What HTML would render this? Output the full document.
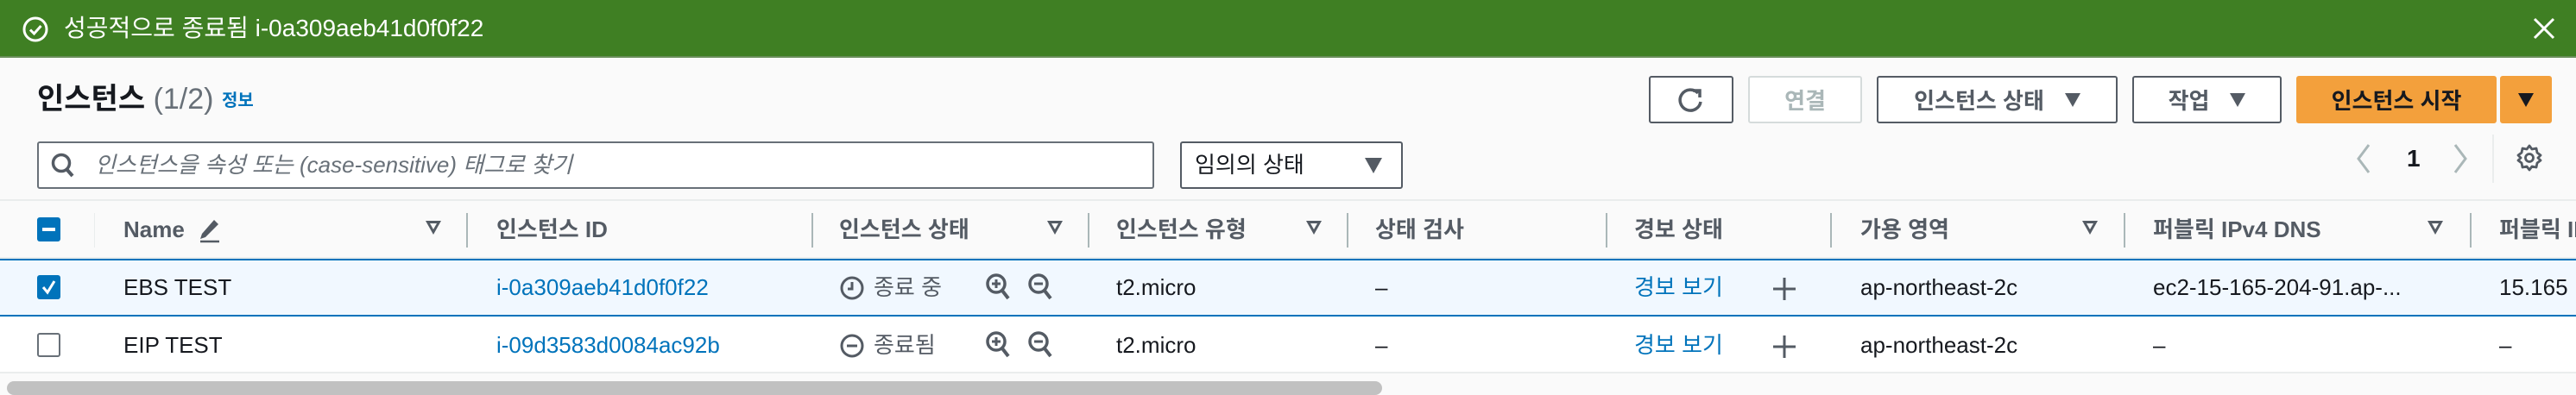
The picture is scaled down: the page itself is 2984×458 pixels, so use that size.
<!DOCTYPE html>
<html><head><meta charset="utf-8"><style>
*{margin:0;padding:0;box-sizing:border-box}
body{width:2984px;height:456px;overflow:hidden;background:#fafafa;font-family:"Liberation Sans","Noto Sans CJK KR",sans-serif;color:#16191f;position:relative}
.a{position:absolute;white-space:nowrap}
.t{font-size:26px;line-height:30px}
.h{font-size:26px;font-weight:bold;color:#545b64;line-height:30px}
.btn{position:absolute;top:88px;height:55px;border:2px solid #545b64;border-radius:3px;background:#fff;font-size:26px;font-weight:bold;color:#545b64;display:flex;align-items:center;justify-content:center}
.link{color:#0073bb}
.div{position:absolute;top:247px;width:2px;height:40px;background:#aab7b8}
.tri{position:absolute;top:256px;width:0;height:0;border-left:9px solid transparent;border-right:9px solid transparent;border-top:16px solid #545b64}
.tri::after{content:"";position:absolute;left:-4px;top:-13px;border-left:4px solid transparent;border-right:4px solid transparent;border-top:7px solid #fafafa}
.dd{display:inline-block;width:0;height:0;border-left:9px solid transparent;border-right:9px solid transparent;border-top:16px solid #545b64;margin-left:24px}
</style></head><body>
<div class="a" style="left:0;top:0;width:2984px;height:67px;background:#3f7f23;border-bottom:2px solid #6a8f5a"></div>
<svg class="a" style="left:25px;top:18px" width="32" height="32" viewBox="0 0 32 32"><circle cx="16" cy="16" r="13" fill="none" stroke="#fff" stroke-width="3"/><path d="M10 16.5l4.5 4.5 8-9" fill="none" stroke="#fff" stroke-width="3"/></svg>
<div class="a" style="left:74px;top:16px;font-size:28px;line-height:34px;color:#fff">성공적으로 종료됨 i-0a309aeb41d0f0f22</div>
<svg class="a" style="left:2934px;top:20px" width="26" height="26" viewBox="0 0 26 26"><path d="M2 2L24 24M24 2L2 24" stroke="#fff" stroke-width="3"/></svg>

<div class="a" style="left:43px;top:95px;font-size:34px;font-weight:bold;line-height:40px">인스턴스 <span style="font-weight:normal;color:#687078">(1/2)</span> <span style="font-size:20px;color:#0073bb;vertical-align:middle">정보</span></div>

<div class="btn" style="left:1910px;width:98px"><svg width="36" height="36" viewBox="0 0 36 36"><path d="M26 10A12 12 0 1 0 29 20" fill="none" stroke="#545b64" stroke-width="3.5"/><path d="M20 7h8v8" fill="none" stroke="#545b64" stroke-width="3.5"/></svg></div>
<div class="btn" style="left:2025px;width:132px;border-color:#d5dbdb;color:#aab7b8">연결</div>
<div class="btn" style="left:2174px;width:279px">인스턴스 상태<span class="dd"></span></div>
<div class="btn" style="left:2470px;width:173px">작업<span class="dd"></span></div>
<div class="btn" style="left:2660px;width:232px;background:#f3a03c;border-color:#f3a03c;color:#16191f">인스턴스 시작</div>
<div class="btn" style="left:2896px;width:60px;background:#f3a03c;border-color:#f3a03c"><span class="dd" style="margin:0;border-top-color:#16191f"></span></div>

<div class="a" style="left:43px;top:164px;width:1294px;height:55px;border:2px solid #687078;border-radius:3px;background:#fff"></div>
<svg class="a" style="left:58px;top:176px" width="30" height="32" viewBox="0 0 30 32"><circle cx="13" cy="13" r="9.5" fill="none" stroke="#545b64" stroke-width="3.5"/><path d="M19 20l7 8" stroke="#545b64" stroke-width="4"/></svg>
<div class="a" style="left:110px;top:176px;font-size:26px;font-style:italic;color:#687078;line-height:30px">인스턴스을 속성 또는 (case-sensitive) 태그로 찾기</div>
<div class="a" style="left:1367px;top:164px;width:258px;height:55px;border:2px solid #545b64;border-radius:3px;background:#fff"></div>
<div class="a t" style="left:1384px;top:176px">임의의 상태</div>
<div class="a" style="left:1581px;top:183px;border-left:10px solid transparent;border-right:10px solid transparent;border-top:18px solid #545b64"></div>

<svg class="a" style="left:2728px;top:166px" width="20" height="36" viewBox="0 0 20 36"><path d="M16 2L4 18l12 16" fill="none" stroke="#aab7b8" stroke-width="3"/></svg>
<div class="a" style="left:2788px;top:168px;font-size:28px;font-weight:bold;line-height:32px">1</div>
<svg class="a" style="left:2840px;top:166px" width="20" height="36" viewBox="0 0 20 36"><path d="M4 2l12 16L4 34" fill="none" stroke="#aab7b8" stroke-width="3"/></svg>
<div class="a" style="left:2887px;top:156px;width:2px;height:56px;background:#eaeded"></div>
<svg class="a" style="left:2913px;top:166px" width="34" height="34" viewBox="0 0 34 34"><path d="M17 3l3 4 5-1 1 5 4 3-3 3 3 3-4 3-1 5-5-1-3 4-3-4-5 1-1-5-4-3 3-3-3-3 4-3 1-5 5 1z" fill="none" stroke="#545b64" stroke-width="2.8" stroke-linejoin="round"/><circle cx="17" cy="17" r="4.5" fill="none" stroke="#545b64" stroke-width="2.8"/></svg>

<div class="a" style="left:0;top:231px;width:2984px;height:2px;background:#eaeded"></div>
<div class="a" style="left:43px;top:252px;width:27px;height:28px;background:#0073bb;border-radius:3px"></div>
<div class="a" style="left:49px;top:264px;width:15px;height:4px;background:#fff"></div>
<div class="a" style="left:109px;top:247px;width:1px;height:40px;background:#eaeded"></div>
<div class="a h" style="left:143px;top:251px">Name</div>
<svg class="a" style="left:228px;top:252px" width="30" height="30" viewBox="0 0 30 30"><path d="M20 3l5 5L10 23l-6 2 2-6z" fill="#545b64"/><path d="M4 28h22" stroke="#545b64" stroke-width="2.5"/></svg>
<div class="tri" style="left:493px"></div>
<div class="div" style="left:540px"></div>
<div class="a h" style="left:575px;top:251px">인스턴스 ID</div>
<div class="div" style="left:940px"></div>
<div class="a h" style="left:972px;top:251px">인스턴스 상태</div>
<div class="tri" style="left:1213px"></div>
<div class="div" style="left:1260px"></div>
<div class="a h" style="left:1293px;top:251px">인스턴스 유형</div>
<div class="tri" style="left:1513px"></div>
<div class="div" style="left:1560px"></div>
<div class="a h" style="left:1593px;top:251px">상태 검사</div>
<div class="div" style="left:1860px"></div>
<div class="a h" style="left:1893px;top:251px">경보 상태</div>
<div class="div" style="left:2120px"></div>
<div class="a h" style="left:2155px;top:251px">가용 영역</div>
<div class="tri" style="left:2412px"></div>
<div class="div" style="left:2460px"></div>
<div class="a h" style="left:2494px;top:251px">퍼블릭 IPv4 DNS</div>
<div class="tri" style="left:2812px"></div>
<div class="div" style="left:2861px"></div>
<div class="a h" style="left:2895px;top:251px">퍼블릭 IPv4</div>

<div class="a" style="left:0;top:298px;width:2984px;height:2px;background:#eaeded"></div>
<div class="a" style="left:0;top:300px;width:2984px;height:67px;background:#f1f8ff;border-top:2px solid #0073bb;border-bottom:2px solid #0073bb"></div>
<div class="a" style="left:43px;top:319px;width:27px;height:28px;background:#0073bb;border-radius:3px"></div>
<svg class="a" style="left:43px;top:319px" width="27" height="28" viewBox="0 0 27 28"><path d="M7 14l5 6 8-13" fill="none" stroke="#fff" stroke-width="3"/></svg>
<div class="a t" style="left:143px;top:318px">EBS TEST</div>
<div class="a t link" style="left:575px;top:318px">i-0a309aeb41d0f0f22</div>
<svg class="a" style="left:972px;top:319px" width="30" height="30" viewBox="0 0 30 30"><circle cx="15" cy="15" r="12" fill="none" stroke="#545b64" stroke-width="3"/><path d="M15 8v8h-5" fill="none" stroke="#545b64" stroke-width="3"/></svg>
<div class="a t" style="left:1012px;top:318px;color:#545b64">종료 중</div>
<svg class="a" style="left:1141px;top:316px" width="32" height="34" viewBox="0 0 32 34"><circle cx="13" cy="13" r="10" fill="none" stroke="#545b64" stroke-width="3.5"/><path d="M20 21l7 9" stroke="#545b64" stroke-width="4"/><path d="M13 8v10M8 13h10" stroke="#545b64" stroke-width="3"/></svg>
<svg class="a" style="left:1190px;top:316px" width="32" height="34" viewBox="0 0 32 34"><circle cx="13" cy="13" r="10" fill="none" stroke="#545b64" stroke-width="3.5"/><path d="M20 21l7 9" stroke="#545b64" stroke-width="4"/><path d="M8 13h10" stroke="#545b64" stroke-width="3"/></svg>
<div class="a t" style="left:1293px;top:318px">t2.micro</div>
<div class="a t" style="left:1593px;top:318px">–</div>
<div class="a t link" style="left:1893px;top:318px">경보 보기</div>
<svg class="a" style="left:2052px;top:320px" width="30" height="30" viewBox="0 0 30 30"><path d="M15 2v26M2 15h26" stroke="#545b64" stroke-width="3"/></svg>
<div class="a t" style="left:2155px;top:318px">ap-northeast-2c</div>
<div class="a t" style="left:2494px;top:318px">ec2-15-165-204-91.ap-...</div>
<div class="a t" style="left:2895px;top:318px">15.165</div>

<div class="a" style="left:0;top:367px;width:2984px;height:66px;background:#fff;border-bottom:2px solid #eaeded"></div>
<div class="a" style="left:43px;top:386px;width:27px;height:28px;border:2px solid #687078;border-radius:3px;background:#fff"></div>
<div class="a t" style="left:143px;top:385px">EIP TEST</div>
<div class="a t link" style="left:575px;top:385px">i-09d3583d0084ac92b</div>
<svg class="a" style="left:972px;top:386px" width="30" height="30" viewBox="0 0 30 30"><circle cx="15" cy="15" r="12" fill="none" stroke="#545b64" stroke-width="3"/><path d="M9 15h12" stroke="#545b64" stroke-width="3"/></svg>
<div class="a t" style="left:1012px;top:385px;color:#545b64">종료됨</div>
<svg class="a" style="left:1141px;top:383px" width="32" height="34" viewBox="0 0 32 34"><circle cx="13" cy="13" r="10" fill="none" stroke="#545b64" stroke-width="3.5"/><path d="M20 21l7 9" stroke="#545b64" stroke-width="4"/><path d="M13 8v10M8 13h10" stroke="#545b64" stroke-width="3"/></svg>
<svg class="a" style="left:1190px;top:383px" width="32" height="34" viewBox="0 0 32 34"><circle cx="13" cy="13" r="10" fill="none" stroke="#545b64" stroke-width="3.5"/><path d="M20 21l7 9" stroke="#545b64" stroke-width="4"/><path d="M8 13h10" stroke="#545b64" stroke-width="3"/></svg>
<div class="a t" style="left:1293px;top:385px">t2.micro</div>
<div class="a t" style="left:1593px;top:385px">–</div>
<div class="a t link" style="left:1893px;top:385px">경보 보기</div>
<svg class="a" style="left:2052px;top:387px" width="30" height="30" viewBox="0 0 30 30"><path d="M15 2v26M2 15h26" stroke="#545b64" stroke-width="3"/></svg>
<div class="a t" style="left:2155px;top:385px">ap-northeast-2c</div>
<div class="a t" style="left:2494px;top:385px">–</div>
<div class="a t" style="left:2895px;top:385px">–</div>

<div class="a" style="left:8px;top:442px;width:1593px;height:16px;background:#c1c1c1;border-radius:8px"></div>
</body></html>
